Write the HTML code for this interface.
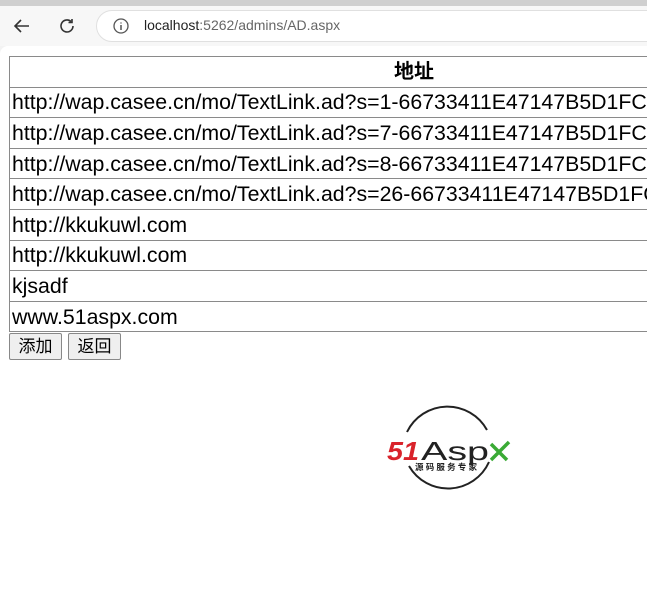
<!DOCTYPE html>
<html><head><meta charset="utf-8"><style>
body{margin:0;width:647px;height:596px;overflow:hidden;background:#f3f3f3;font-family:"Liberation Sans","Noto Sans CJK SC",sans-serif;position:relative}
.top{position:absolute;left:0;top:0;width:647px;height:6px;background:#cfcfcf}
.bar{position:absolute;left:0;top:6px;width:647px;height:40px;background:#f7f7f7}
.url{position:absolute;left:96px;top:10px;width:580px;height:30px;border-radius:16px;background:#fff;border:1px solid #e0e0e0}
.page{position:absolute;left:0;top:46px;width:647px;height:550px;background:#fff;border-top-left-radius:8px}
table{position:absolute;left:9px;top:56px;border-collapse:collapse;width:700px}
td,th{box-sizing:border-box;border:1px solid #8a8a8a;height:30.6px;padding:0 0 0 2px;font-size:21.3px;line-height:28px;white-space:nowrap;color:#000;overflow:hidden}
th{font-weight:bold;text-align:left;padding-left:384px;font-size:20px}
.btn{position:absolute;top:333px;height:27px;border:1px solid #888;border-radius:2px;background:#efefef;font-size:17px;line-height:25px;text-align:center;box-sizing:border-box}
</style></head><body>
<div class="top"></div><div class="bar"></div>
<svg style="position:absolute;left:12px;top:16px" width="20" height="20" viewBox="0 0 20 20"><path d="M17 10H3M9 4L3 10l6 6" stroke="#333" stroke-width="1.6" fill="none"/></svg>
<svg style="position:absolute;left:57px;top:16px" width="20" height="20" viewBox="0 0 20 20"><path d="M16 10a6 6 0 1 1-2-4.5M15 3v3.5h-3.5" stroke="#333" stroke-width="1.6" fill="none"/></svg>
<div class="url"></div>
<svg style="position:absolute;left:112px;top:17px" width="18" height="18" viewBox="0 0 18 18"><circle cx="9" cy="9" r="7" stroke="#555" stroke-width="1.3" fill="none"/><path d="M9 8v5M9 5.5v1" stroke="#555" stroke-width="1.5"/></svg>
<div style="position:absolute;left:144px;top:17px;font-size:14px;color:#222">localhost<span style="color:#666">:5262/admins/AD.aspx</span></div>
<div class="page"></div>
<table>
<tr><th>地址</th></tr>
<tr><td>http://wap.casee.cn/mo/TextLink.ad?s=1-66733411E47147B5D1FC</td></tr>
<tr><td>http://wap.casee.cn/mo/TextLink.ad?s=7-66733411E47147B5D1FC</td></tr>
<tr><td>http://wap.casee.cn/mo/TextLink.ad?s=8-66733411E47147B5D1FC</td></tr>
<tr><td>http://wap.casee.cn/mo/TextLink.ad?s=26-66733411E47147B5D1FC</td></tr>
<tr><td>http://kkukuwl.com</td></tr>
<tr><td>http://kkukuwl.com</td></tr>
<tr><td>kjsadf</td></tr>
<tr><td>www.51aspx.com</td></tr>
</table>
<div class="btn" style="left:9px;width:53px">添加</div>
<div class="btn" style="left:68px;width:53px">返回</div>
<svg style="position:absolute;left:385px;top:400px" width="130" height="95" viewBox="0 0 130 95">
<path d="M22 32 A45 45 0 0 1 102 30" stroke="#222" stroke-width="2" fill="none"/>
<path d="M104 62 A45 45 0 0 1 24 66" stroke="#222" stroke-width="2" fill="none"/>
<text x="2" y="60" font-family="Liberation Sans" font-weight="bold" font-style="italic" font-size="26" fill="#d9232b" textLength="32" lengthAdjust="spacingAndGlyphs">51</text>
<text x="36" y="60" font-family="Liberation Sans" font-size="26" fill="#222" textLength="68" lengthAdjust="spacingAndGlyphs">Asp</text>
<path d="M106 44 L122 60 M124 42 L106 60" stroke="#3aaa35" stroke-width="3.5"/>
<text x="30" y="70" font-family="Noto Sans CJK SC,sans-serif" font-size="8.5" font-weight="bold" fill="#222" textLength="62">源码服务专家</text>
</svg>
</body></html>
